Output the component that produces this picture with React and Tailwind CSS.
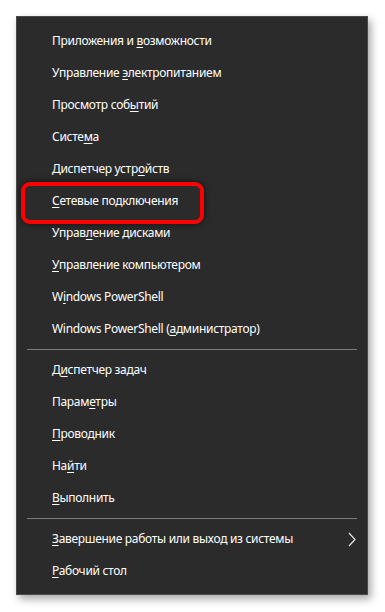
import React from 'react';

const groups = [
  [
    ['Приложения и ', 'в', 'озможности'],
    ['Управление ', 'э', 'лектропитанием'],
    ['Просмотр соб', 'ы', 'тий'],
    ['Систе', 'м', 'а'],
    ['Диспетчер устр', 'о', 'йств'],
    ['', 'С', 'етевые подключения'],
    ['Управ', 'л', 'ение дисками'],
    ['', 'У', 'правление компьютером'],
    ['W', 'i', 'ndows PowerShell'],
    ['Windows PowerShell (', 'а', 'дминистратор)'],
  ],
  [
    ['Д', 'и', 'спетчер задач'],
    ['Парам', 'е', 'тры'],
    ['', 'П', 'роводник'],
    ['На', 'й', 'ти'],
    ['', 'В', 'ыполнить'],
  ],
  [
    ['', 'З', 'авершение работы или выход из системы', true],
    ['', 'Р', 'абочий стол'],
  ],
];

function Item({ item, highlight }) {
  const [a, key, b, sub] = item;
  return (
    <div className="relative h-[32px] flex items-center pl-[35px] pr-[10px]">
      <span className="text-[12px] tracking-[-0.3px] text-white whitespace-nowrap">
        {a}
        <span className="underline underline-offset-2">{key}</span>
        {b}
      </span>
      {sub && (
        <svg className="ml-auto mr-[1px]" width="8" height="15" viewBox="0 0 8 15">
          <path d="M1 1 L7 7.5 L1 14" fill="none" stroke="#e8e8e8" strokeWidth="1.2" />
        </svg>
      )}
      {highlight && (
        <div className="absolute left-[4px] top-[-3px] w-[183px] h-[42px] rounded-[9px] border-[4px] border-[#ff0000] shadow-[0_0_6px_rgba(0,0,0,0.6)]" />
      )}
    </div>
  );
}

export default function App() {
  return (
    <div className="w-[385px] h-[612px] bg-white pt-[16px] pl-[16px]" style={{ fontFamily: '"Noto Sans", "Open Sans", sans-serif' }}>
      <div className="w-[352px] h-[579px] bg-[#2b2b2b] border border-[#4a4a4a] shadow-[3px_4px_8px_rgba(0,0,0,0.35)] pt-[8px]">
        {groups.map((g, gi) => (
          <div key={gi}>
            {gi > 0 && (
              <div className="h-[9px] flex items-center px-[10px]">
                <div className="h-px w-full bg-[#7d7d7d]" />
              </div>
            )}
            {g.map((item, i) => (
              <Item key={i} item={item} highlight={gi === 0 && i === 5} />
            ))}
          </div>
        ))}
      </div>
    </div>
  );
}
